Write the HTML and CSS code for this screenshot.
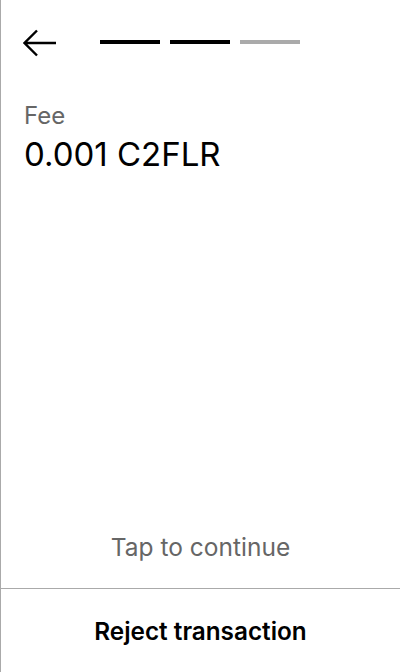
FILE: index.html
```html
<!DOCTYPE html>
<html>
<head>
<meta charset="utf-8">
<link rel="stylesheet" href="styles.css">
</head>
<body>
<div class="screen">
  <header class="top">
    <button class="back" aria-label="Back">
      <svg width="34" height="28" viewBox="0 0 34 28"><path d="M33 14H2M14 1.5L1.5 14 14 26.5" fill="none" stroke="#000" stroke-width="2.4"/></svg>
    </button>
    <div class="steps">
      <span class="step done"></span>
      <span class="step done"></span>
      <span class="step"></span>
    </div>
  </header>
  <section class="fee">
    <div class="label">Fee</div>
    <div class="value">0.001 C2FLR</div>
  </section>
  <div class="tap">Tap to continue</div>
  <div class="reject">Reject transaction</div>
</div>
</body>
</html>
```
FILE: styles.css
```css
html, body { margin: 0; padding: 0; background: #fff; }
body { font-family: Inter, "Noto Sans", sans-serif; color: #000; }
.screen {
  width: 400px; height: 672px; box-sizing: border-box;
  border-left: 1px solid #aaa;
  display: flex; flex-direction: column;
}
.top { display: flex; align-items: center; height: 28px; margin-top: 29px; padding-left: 22px; }
.back { border: 0; background: none; padding: 0; width: 34px; height: 28px; display: block; }
.back svg { display: block; }
.steps { display: flex; gap: 10px; margin-left: 43px; margin-top: -2px; }
.step { width: 60px; height: 4px; background: #aaa; display: block; }
.step.done { background: #000; }
.fee { padding: 0 23px; margin-top: 44px; }
.label { font-size: 24px; color: #666; line-height: 29px; }
.value { font-size: 33px; line-height: 40px; margin-top: 4px; }
.tap { margin-top: auto; text-align: center; font-size: 24.5px; color: #666; line-height: 29px; margin-bottom: 26px; }
.reject { border-top: 1px solid #aaa; height: 84px; box-sizing: border-box; padding-top: 1px; display: flex; align-items: center; justify-content: center; font-size: 24.3px; font-weight: 600; }
```
